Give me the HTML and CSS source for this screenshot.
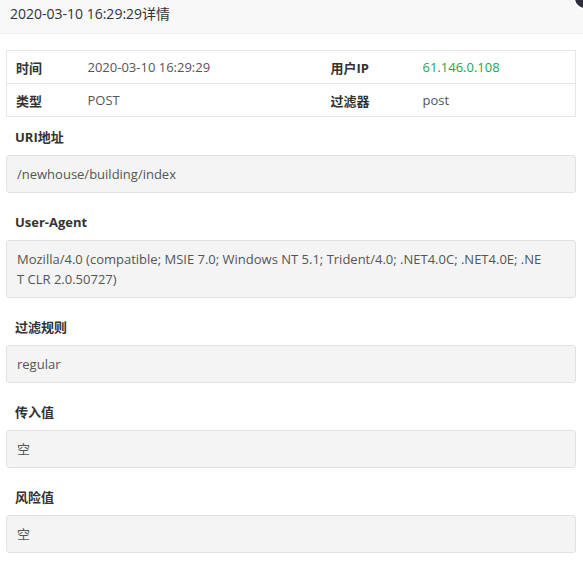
FILE: index.html
```html
<!DOCTYPE html>
<html lang="zh-CN">
<head>
    <meta charset="UTF-8">
    <meta name="viewport" content="width=device-width, initial-scale=1.0">
    <title>日志详情</title>
    <link rel="stylesheet" href="styles.css">
</head>
<body>
    <div class="layer">
        <div class="layer-title">2020-03-10 16:29:29详情</div>
        <span class="layer-close"></span>
        <div class="layer-content">
            <table class="info-table">
                <colgroup>
                    <col style="width: 72px">
                    <col style="width: 243px">
                    <col style="width: 92px">
                    <col>
                </colgroup>
                <tbody>
                    <tr>
                        <th>时间</th>
                        <td>2020-03-10 16:29:29</td>
                        <th>用户IP</th>
                        <td class="ip">61.146.0.108</td>
                    </tr>
                    <tr>
                        <th>类型</th>
                        <td>POST</td>
                        <th>过滤器</th>
                        <td>post</td>
                    </tr>
                </tbody>
            </table>

            <div class="field first">
                <div class="field-label">URI地址</div>
                <div class="field-box">/newhouse/building/index</div>
            </div>
            <div class="field">
                <div class="field-label">User-Agent</div>
                <div class="field-box">Mozilla/4.0 (compatible; MSIE 7.0; Windows NT 5.1; Trident/4.0; .NET4.0C; .NET4.0E; .NET CLR 2.0.50727)</div>
            </div>
            <div class="field">
                <div class="field-label">过滤规则</div>
                <div class="field-box">regular</div>
            </div>
            <div class="field">
                <div class="field-label">传入值</div>
                <div class="field-box">空</div>
            </div>
            <div class="field">
                <div class="field-label">风险值</div>
                <div class="field-box">空</div>
            </div>
        </div>
    </div>
</body>
</html>
```

FILE: styles.css
```css
body {
    margin: 0;
    background-color: #fff;
    font-family: "Open Sans", "Noto Sans CJK SC", sans-serif;
    font-size: 13px;
    color: #555;
}
.layer {
    position: relative;
    width: 583px;
    height: 562px;
    overflow: hidden;
}
.layer-title {
    height: 33px;
    line-height: 28px;
    padding-left: 10px;
    background-color: #f8f8f8;
    border-bottom: 1px solid #eee;
    font-size: 14px;
    color: #333;
}
.layer-close {
    position: absolute;
    top: -14px;
    right: -14px;
    width: 20px;
    height: 20px;
    border-radius: 50%;
    background-color: #2e2d3c;
    border: 2px solid #fff;
}
.layer-content {
    padding: 16px 7px 0 6px;
}
.info-table {
    width: 100%;
    table-layout: fixed;
    border-collapse: collapse;
    border: 1px solid #e6e6e6;
}
.info-table th,
.info-table td {
    height: 32px;
    padding: 0 9px;
    text-align: left;
    border-top: 1px solid #e6e6e6;
    white-space: nowrap;
}
.info-table th {
    color: #333;
    font-weight: bold;
}
.info-table .ip {
    color: #23a845;
}
.field {
    margin-top: 19px;
}
.field.first {
    margin-top: 10px;
}
.field-label {
    line-height: 20px;
    padding-left: 9px;
    color: #333;
    font-weight: bold;
    margin-bottom: 8px;
}
.field-box {
    padding: 8px 30px 8px 10px;
    line-height: 20px;
    background-color: #f4f4f4;
    border: 1px solid #e2e2e2;
    border-radius: 3px;
    word-break: break-all;
}
```
